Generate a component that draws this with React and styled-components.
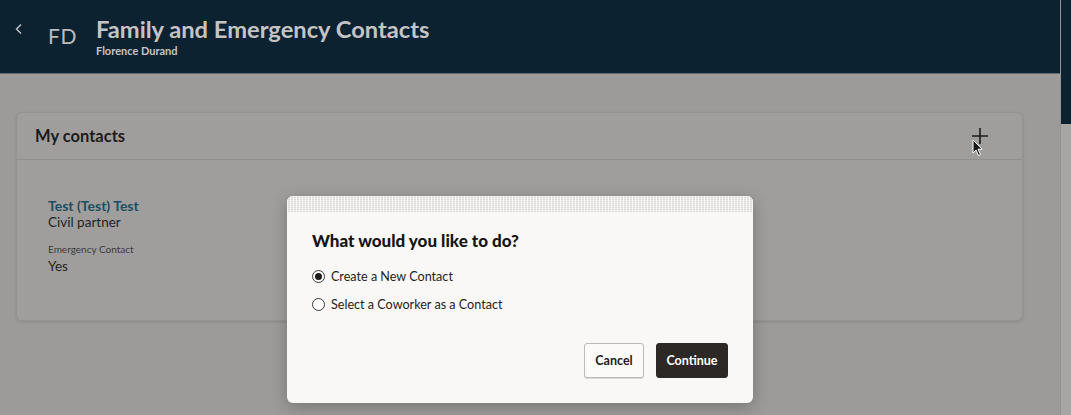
import React from 'react'
import styled, { createGlobalStyle } from 'styled-components'

const GlobalStyle = createGlobalStyle`
  html, body {
    margin: 0;
    padding: 0;
    background: #9d9b9a;
    font-family: Lato, "Noto Sans", sans-serif;
    overflow: hidden;
  }
`

const Page = styled.div`
  position: relative;
  display: flex;
  width: 1071px;
  height: 415px;
  overflow: hidden;
`

const Main = styled.div`
  flex: 1;
  display: flex;
  flex-direction: column;
`

const ScrollBar = styled.div`
  width: 10px;
  display: flex;
  flex-direction: column;
  background: #a8a6a5;
  border-left: 1px solid #959392;
`

const ScrollThumb = styled.div`
  height: 124px;
  background: #0d2231;
`

const Header = styled.header`
  height: 74px;
  background: #0d2231;
  border-bottom: 1px solid #5d6a72;
  display: flex;
  align-items: flex-start;
  padding: 15px 0 0 14px;
  box-sizing: border-box;
`

const Back = styled.div`
  width: 14px;
  height: 28px;
  display: flex;
  align-items: center;
  color: #c3c6c9;
`

const Initials = styled.div`
  margin: 8px 0 0 20px;
  width: 28px;
  font-size: 21px;
  color: #b9bdc1;
  letter-spacing: 0.5px;
`

const TitleBlock = styled.div`
  margin-left: 20px;
  display: flex;
  flex-direction: column;
`

const Title = styled.h1`
  margin: 0;
  font-size: 23.7px;
  line-height: 28px;
  font-weight: 700;
  color: #c4c4c4;
`

const Subtitle = styled.div`
  margin-top: 1px;
  font-size: 11px;
  font-weight: 700;
  color: #c4c6c8;
`

const Body = styled.div`
  flex: 1;
  padding: 38px 37px 0 16px;
`

const Card = styled.section`
  height: 207px;
  background: #a09e9d;
  border: 1px solid #959392;
  border-radius: 6px;
  box-shadow: 0 1px 3px rgba(0, 0, 0, 0.12);
  display: flex;
  flex-direction: column;
`

const CardHeader = styled.div`
  height: 46px;
  border-bottom: 1px solid #918f8e;
  display: flex;
  align-items: center;
  justify-content: space-between;
  padding: 0 32px 0 18px;
`

const CardTitle = styled.h2`
  margin: 0 0 1px 0;
  font-size: 16.5px;
  line-height: 20px;
  font-weight: 700;
  color: #1d1b1a;
`

const AddButton = styled.div`
  width: 20px;
  height: 20px;
  color: #1c1a19;
  display: flex;
  margin-bottom: 1px;
`

const ContactBlock = styled.div`
  padding: 38px 0 0 31px;
  display: flex;
  flex-direction: column;
`

const ContactName = styled.div`
  font-size: 14px;
  font-weight: 700;
  color: #214e5f;
  line-height: 16px;
`

const Value = styled.div`
  font-size: 13.5px;
  color: #252322;
  line-height: 17px;
`

const Label = styled.div`
  margin-top: 11px;
  margin-bottom: 2px;
  font-size: 10px;
  color: #3b3938;
  line-height: 14px;
`

const Dialog = styled.div`
  position: absolute;
  left: 287px;
  top: 196px;
  width: 466px;
  height: 207px;
  background: #f9f8f6;
  border-radius: 6px;
  box-shadow: 0 4px 16px rgba(0, 0, 0, 0.25);
  display: flex;
  flex-direction: column;
  overflow: hidden;
`

const DialogTexture = styled.div`
  height: 16px;
  background-color: #ecebe9;
  background-image:
    repeating-linear-gradient(90deg, rgba(255,255,255,0.7) 0 1px, transparent 1px 3px),
    repeating-linear-gradient(0deg, rgba(210,208,205,0.6) 0 1px, transparent 1px 2px);
`

const DialogBody = styled.div`
  flex: 1;
  padding: 18px 25px 0 25px;
  display: flex;
  flex-direction: column;
`

const DialogTitle = styled.h3`
  margin: 0;
  font-size: 17px;
  font-weight: 900;
  color: #161513;
  line-height: 22px;
`

const Options = styled.div`
  margin-top: 14px;
  display: flex;
  flex-direction: column;
  gap: 8px;
`

const Option = styled.label`
  display: flex;
  align-items: center;
  gap: 6px;
  height: 20px;
  font-size: 12.6px;
  color: #252321;
`

const Radio = styled.span`
  width: 11px;
  height: 11px;
  border: 1px solid #3b3937;
  border-radius: 50%;
  display: flex;
  align-items: center;
  justify-content: center;
  background: #fff;

  &::after {
    content: '';
    width: 7px;
    height: 7px;
    border-radius: 50%;
    background: ${props => (props.checked ? '#1f1d1b' : 'transparent')};
  }
`

const Actions = styled.div`
  margin-top: auto;
  padding: 0 0 25px 0;
  display: flex;
  justify-content: flex-end;
  gap: 12px;
`

const Button = styled.button`
  height: 35px;
  width: ${props => (props.primary ? '72px' : '60px')};
  padding: 0;
  border-radius: 3px;
  font-family: inherit;
  font-size: 12.5px;
  font-weight: 700;
  border: 1px solid ${props => (props.primary ? '#2c2825' : '#bcbab7')};
  background: ${props => (props.primary ? '#2c2825' : '#fbfaf9')};
  color: ${props => (props.primary ? '#ffffff' : '#1d1b1a')};
  box-shadow: ${props => (props.primary ? 'none' : '0 1px 0 rgba(0,0,0,0.12)')};
`

const Cursor = styled.div`
  position: absolute;
  left: 972px;
  top: 139px;
  width: 12px;
  height: 18px;
`

export default function App() {
  return (
    <>
      <GlobalStyle />
      <Page>
        <Main>
          <Header>
            <Back>
              <svg width="10" height="12" viewBox="0 0 10 12">
                <path d="M7 1.5 L2.5 6 L7 10.5" fill="none" stroke="currentColor" strokeWidth="1.4" />
              </svg>
            </Back>
            <Initials>FD</Initials>
            <TitleBlock>
              <Title>Family and Emergency Contacts</Title>
              <Subtitle>Florence Durand</Subtitle>
            </TitleBlock>
          </Header>
          <Body>
            <Card>
              <CardHeader>
                <CardTitle>My contacts</CardTitle>
                <AddButton>
                  <svg width="20" height="20" viewBox="0 0 20 20">
                    <path d="M10 2 V18 M2 10 H18" stroke="currentColor" strokeWidth="1.6" />
                  </svg>
                </AddButton>
              </CardHeader>
              <ContactBlock>
                <ContactName>Test (Test) Test</ContactName>
                <Value>Civil partner</Value>
                <Label>Emergency Contact</Label>
                <Value>Yes</Value>
              </ContactBlock>
            </Card>
          </Body>
        </Main>
        <ScrollBar>
          <ScrollThumb />
        </ScrollBar>
        <Cursor>
          <svg width="12" height="18" viewBox="0 0 12 18">
            <path d="M1 1 L1 14 L4 11 L6.5 16.5 L8.5 15.5 L6 10.2 L10.2 10.2 Z" fill="#1a1a1a" stroke="#ffffff" strokeWidth="1" />
          </svg>
        </Cursor>
        <Dialog>
          <DialogTexture />
          <DialogBody>
            <DialogTitle>What would you like to do?</DialogTitle>
            <Options>
              <Option>
                <Radio checked />
                Create a New Contact
              </Option>
              <Option>
                <Radio />
                Select a Coworker as a Contact
              </Option>
            </Options>
            <Actions>
              <Button>Cancel</Button>
              <Button primary>Continue</Button>
            </Actions>
          </DialogBody>
        </Dialog>
      </Page>
    </>
  )
}
